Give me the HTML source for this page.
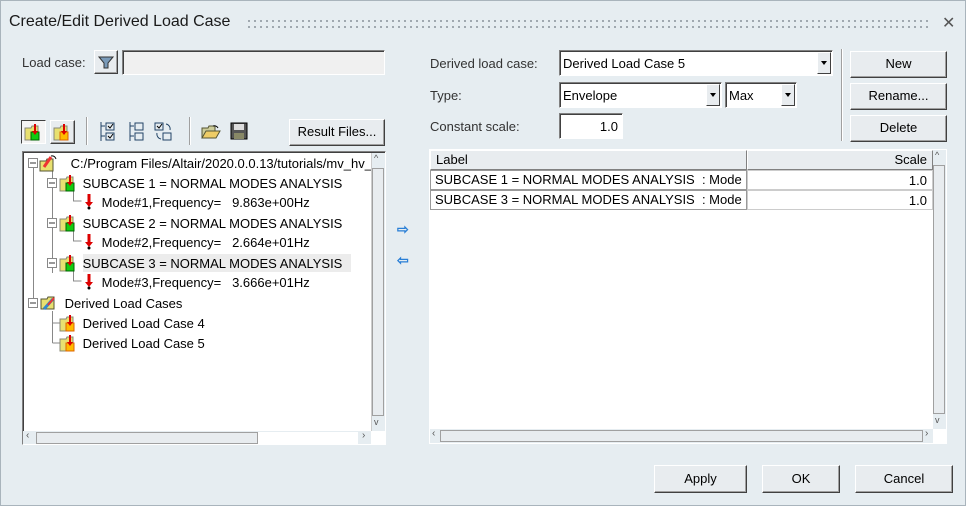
<!DOCTYPE html>
<html><head><meta charset="utf-8"><style>
*{box-sizing:border-box;margin:0;padding:0}
body{width:966px;height:506px;background:#e6edf1;font-family:"Liberation Sans",sans-serif;font-size:13px;color:#000;position:relative;overflow:hidden;border:1px solid #a9b4bc}
.a{position:absolute;white-space:nowrap}
.btn{position:absolute;background:#e8ecef;border:1px solid;border-color:#fff #404040 #404040 #fff;box-shadow:inset -1px -1px 0 #a0a0a0;text-align:center;font-size:13px}
.sunk{position:absolute;background:#fff;border:1px solid;border-color:#808080 #fff #fff #808080;box-shadow:inset 1px 1px 0 #404040}
.lbl{color:#333;font-size:13px}
.dd{position:absolute;top:1px;right:1px;width:14px;bottom:1px;background:#e8ecef;border:1px solid;border-color:#fff #404040 #404040 #fff}
.dd:after{content:"";position:absolute;left:3px;top:8px;border:3px solid transparent;border-top:4px solid #000}
.row{position:absolute;height:20px;line-height:20px;white-space:nowrap}
.sb{position:absolute;background:#e6edf1}
</style></head><body>
<div class="a" style="left:8px;top:12px;font-size:16px;color:#1a1a1a">Create/Edit Derived Load Case</div>
<div class="a" style="left:245px;top:17px;width:685px;height:12px;background-image:radial-gradient(circle,#9aa3aa 1px,transparent 1.2px);background-size:6px 6px"></div>
<div class="a" style="left:941px;top:12px;font-size:16px;color:#555">✕</div>

<div class="a lbl" style="left:21px;top:54px">Load case:</div>
<div class="btn" style="left:93px;top:49px;width:24px;height:24px"><svg width="22" height="22"><path d="M4 6h14l-5 6v5h-4v-5z" fill="#7a9ab8" stroke="#333"/></svg></div>
<div class="sunk" style="left:121px;top:49px;width:263px;height:25px;background:#f0f0f0"></div>

<div class="a" style="left:20px;top:119px;width:25px;height:24px;background:#f4f4f4;border:1px solid;border-color:#404040 #fff #fff #404040"></div>
<svg class="a" style="left:23px;top:121px" width="20" height="20"><path d="M1 6h6l1-2h6v14H1z" fill="#e8e070" stroke="#887"/><rect x="7" y="10" width="8" height="8" fill="#1c1" stroke="#060"/><path d="M11 2v9" stroke="#d00" stroke-width="2"/><path d="M8 9l3 4 3-4z" fill="#d00"/></svg>
<div class="btn" style="left:49px;top:119px;width:25px;height:24px"></div>
<svg class="a" style="left:52px;top:121px" width="20" height="20"><path d="M1 6h6l1-2h6v14H1z" fill="#e8e070" stroke="#887"/><rect x="7" y="10" width="8" height="8" fill="#fb0" stroke="#d60"/><path d="M11 2v9" stroke="#d00" stroke-width="2"/><path d="M8 9l3 4 3-4z" fill="#d00"/></svg>
<div class="a" style="left:85px;top:116px;width:2px;height:28px;border-left:1px solid #a0a0a0;border-right:1px solid #fff"></div>
<svg class="a" style="left:98px;top:120px" width="22" height="22" fill="none" stroke="#246"><path d="M2 1v19M2 5h4M2 15h4"/><rect x="7" y="2" width="8" height="7"/><rect x="7" y="12" width="8" height="7"/><path d="M9 5l2 2 3-4M9 15l2 2 3-4" stroke="#000"/></svg>
<svg class="a" style="left:127px;top:120px" width="22" height="22" fill="none" stroke="#246"><path d="M2 1v19M2 5h4M2 15h4"/><rect x="7" y="2" width="8" height="7"/><rect x="7" y="12" width="8" height="7"/></svg>
<svg class="a" style="left:152px;top:120px" width="22" height="22" fill="none" stroke="#246"><rect x="2" y="2" width="8" height="7"/><rect x="10" y="12" width="8" height="7"/><path d="M4 5l2 2 3-4" stroke="#000"/><path d="M13 3a5 5 0 0 1 4 6M8 18a5 5 0 0 1-4-6"/></svg>
<div class="a" style="left:188px;top:116px;width:2px;height:28px;border-left:1px solid #a0a0a0;border-right:1px solid #fff"></div>
<svg class="a" style="left:200px;top:121px" width="20" height="20"><path d="M1 6h6l1-2h6v12H1z" fill="#cc9" stroke="#553"/><path d="M1 16l4-7h14l-4 7z" fill="#ec6" stroke="#553"/><path d="M12 4a4 4 0 0 1 5 2" fill="none" stroke="#000"/></svg>
<svg class="a" style="left:229px;top:121px" width="18" height="18"><rect x="1" y="1" width="16" height="16" fill="#555" stroke="#000"/><rect x="4" y="2" width="10" height="6" fill="#ddd"/><rect x="4" y="11" width="10" height="6" fill="#886"/></svg>
<div class="btn" style="left:288px;top:118px;width:96px;height:27px;line-height:24px">Result Files...</div>

<div class="sunk" style="left:21px;top:150px;width:364px;height:294px"></div>
<div class="a" style="left:23px;top:152px;width:347px;height:278px;overflow:hidden">
 <svg class="a" style="left:0;top:0" width="347" height="278" stroke="#888" fill="none" shape-rendering="crispEdges">
  <path d="M9.5 10v140M28.5 18v102M49.5 38v10h8M49.5 78v10h8M49.5 118v10h8M28.5 158v32M28.5 170h8M28.5 190h8"/>
  <g fill="#fff"><rect x="4.5" y="5.5" width="9" height="9"/><rect x="23.5" y="25.5" width="9" height="9"/><rect x="23.5" y="65.5" width="9" height="9"/><rect x="23.5" y="105.5" width="9" height="9"/><rect x="4.5" y="145.5" width="9" height="9"/></g>
  <path d="M6 10h6M25 30h6M25 70h6M25 110h6M6 150h6" stroke="#333"/>
 </svg>
 <div class="row" style="left:15px;top:0"><svg width="20" height="20" style="vertical-align:-5px"><path d="M1 8h6l1-2h6v12H1z" fill="#e8e070" stroke="#553"/><path d="M5 14l7-10" stroke="#e33" stroke-width="3"/><path d="M12 3a4 4 0 0 1 5 3" fill="none" stroke="#000"/></svg> <span style="margin-left:8px">C:/Program Files/Altair/2020.0.0.13/tutorials/mv_hv_</span></div>
 <div class="row" style="left:35px;top:20px"><svg width="20" height="20" style="vertical-align:-5px"><path d="M1 6h6l1-2h6v14H1z" fill="#e8e070" stroke="#887"/><rect x="7" y="10" width="8" height="8" fill="#1c1" stroke="#060"/><path d="M11 2v9" stroke="#d00" stroke-width="2"/><path d="M8 9l3 4 3-4z" fill="#d00"/></svg> <span>SUBCASE 1 = NORMAL MODES ANALYSIS</span></div>
 <div class="row" style="left:60px;top:40px"><svg width="10" height="18" style="vertical-align:-4px"><path d="M5 1v9" stroke="#d00" stroke-width="3"/><path d="M1 9l4 5 4-5z" fill="#d00"/><circle cx="5" cy="15" r="1.5" fill="#000"/></svg> <span style="margin-left:4px">Mode#1,Frequency=&nbsp;&nbsp; 9.863e+00Hz</span></div>
 <div class="row" style="left:35px;top:60px"><svg width="20" height="20" style="vertical-align:-5px"><path d="M1 6h6l1-2h6v14H1z" fill="#e8e070" stroke="#887"/><rect x="7" y="10" width="8" height="8" fill="#1c1" stroke="#060"/><path d="M11 2v9" stroke="#d00" stroke-width="2"/><path d="M8 9l3 4 3-4z" fill="#d00"/></svg> <span>SUBCASE 2 = NORMAL MODES ANALYSIS</span></div>
 <div class="row" style="left:60px;top:80px"><svg width="10" height="18" style="vertical-align:-4px"><path d="M5 1v9" stroke="#d00" stroke-width="3"/><path d="M1 9l4 5 4-5z" fill="#d00"/><circle cx="5" cy="15" r="1.5" fill="#000"/></svg> <span style="margin-left:4px">Mode#2,Frequency=&nbsp;&nbsp; 2.664e+01Hz</span></div>
 <div class="a" style="left:59px;top:101px;width:268px;height:18px;background:#ececec"></div>
 <div class="row" style="left:35px;top:100px"><svg width="20" height="20" style="vertical-align:-5px"><path d="M1 6h6l1-2h6v14H1z" fill="#e8e070" stroke="#887"/><rect x="7" y="10" width="8" height="8" fill="#1c1" stroke="#060"/><path d="M11 2v9" stroke="#d00" stroke-width="2"/><path d="M8 9l3 4 3-4z" fill="#d00"/></svg> <span>SUBCASE 3 = NORMAL MODES ANALYSIS</span></div>
 <div class="row" style="left:60px;top:120px"><svg width="10" height="18" style="vertical-align:-4px"><path d="M5 1v9" stroke="#d00" stroke-width="3"/><path d="M1 9l4 5 4-5z" fill="#d00"/><circle cx="5" cy="15" r="1.5" fill="#000"/></svg> <span style="margin-left:4px">Mode#3,Frequency=&nbsp;&nbsp; 3.666e+01Hz</span></div>
 <div class="row" style="left:16px;top:140px"><svg width="20" height="20" style="vertical-align:-5px"><path d="M1 6h6l1-2h6v12H1z" fill="#e8e070" stroke="#553"/><path d="M4 16l9-10" stroke="#38c" stroke-width="3"/><path d="M8 12l6-7" stroke="#e33" stroke-width="2"/></svg> <span style="margin-left:1px">Derived Load Cases</span></div>
 <div class="row" style="left:35px;top:160px"><svg width="20" height="20" style="vertical-align:-5px"><path d="M1 6h6l1-2h6v14H1z" fill="#e8e070" stroke="#887"/><rect x="7" y="10" width="8" height="8" fill="#fb0" stroke="#d60"/><path d="M11 2v9" stroke="#d00" stroke-width="2"/><path d="M8 9l3 4 3-4z" fill="#d00"/></svg> <span>Derived Load Case 4</span></div>
 <div class="row" style="left:35px;top:180px"><svg width="20" height="20" style="vertical-align:-5px"><path d="M1 6h6l1-2h6v14H1z" fill="#e8e070" stroke="#887"/><rect x="7" y="10" width="8" height="8" fill="#fb0" stroke="#d60"/><path d="M11 2v9" stroke="#d00" stroke-width="2"/><path d="M8 9l3 4 3-4z" fill="#d00"/></svg> <span>Derived Load Case 5</span></div>
</div>
<div class="sb" style="left:370px;top:152px;width:14px;height:278px;border-left:1px solid #ccc"></div>
<div class="a" style="left:373px;top:152px;font-size:9px;color:#555">^</div>
<div class="a" style="left:371px;top:167px;width:12px;height:248px;border:1px solid #a0a0a0;background:#e8ecef"></div>
<div class="a" style="left:373px;top:416px;font-size:9px;color:#555">v</div>
<div class="sb" style="left:22px;top:430px;width:348px;height:13px"></div>
<div class="a" style="left:35px;top:431px;width:222px;height:12px;border:1px solid #a0a0a0;background:#e8ecef"></div>
<div class="a" style="left:257px;top:431px;width:100px;height:12px;background:#fff"></div>
<div class="a" style="left:25px;top:429px;font-size:10px;color:#555">‹</div>
<div class="a" style="left:361px;top:429px;font-size:10px;color:#555">›</div>

<div class="a" style="left:396px;top:220px;color:#2a7fd6;font-size:14px;font-weight:bold">⇨</div>
<div class="a" style="left:396px;top:251px;color:#2a7fd6;font-size:14px;font-weight:bold">⇦</div>

<div class="a lbl" style="left:429px;top:55px">Derived load case:</div>
<div class="sunk" style="left:558px;top:49px;width:274px;height:26px"><span class="a" style="left:3px;top:5px">Derived Load Case 5</span><div class="dd"></div></div>
<div class="a lbl" style="left:429px;top:87px">Type:</div>
<div class="sunk" style="left:558px;top:81px;width:163px;height:26px"><span class="a" style="left:3px;top:5px">Envelope</span><div class="dd"></div></div>
<div class="sunk" style="left:724px;top:81px;width:72px;height:26px"><span class="a" style="left:3px;top:5px">Max</span><div class="dd"></div></div>
<div class="a lbl" style="left:429px;top:118px">Constant scale:</div>
<div class="sunk" style="left:558px;top:112px;width:64px;height:26px"><span class="a" style="right:4px;top:5px">1.0</span></div>
<div class="a" style="left:840px;top:48px;width:2px;height:92px;border-left:1px solid #a0a0a0;border-right:1px solid #fff"></div>
<div class="btn" style="left:849px;top:50px;width:97px;height:27px;line-height:24px">New</div>
<div class="btn" style="left:849px;top:82px;width:97px;height:27px;line-height:24px">Rename...</div>
<div class="btn" style="left:849px;top:114px;width:97px;height:27px;line-height:24px">Delete</div>

<div class="sunk" style="left:428px;top:148px;width:518px;height:295px;box-shadow:none;border-color:#fff"></div>
<div class="a" style="left:429px;top:149px;width:317px;height:20px;background:#e8ecef;border:1px solid;border-color:#fff #808080 #808080 #fff;padding:1px 5px">Label</div>
<div class="a" style="left:746px;top:149px;width:186px;height:20px;background:#e8ecef;border:1px solid;border-color:#fff #808080 #808080 #fff;padding:1px 5px;text-align:right">Scale</div>
<div class="a" style="left:429px;top:169px;width:317px;height:20px;border:1px solid #999;padding:1px 4px;overflow:hidden">SUBCASE 1 = NORMAL MODES ANALYSIS&nbsp; : Mode</div>
<div class="a" style="left:746px;top:169px;width:186px;height:20px;border:1px solid #ccc;padding:2px 5px;text-align:right">1.0</div>
<div class="a" style="left:429px;top:189px;width:317px;height:20px;border:1px solid #999;padding:1px 4px;overflow:hidden">SUBCASE 3 = NORMAL MODES ANALYSIS&nbsp; : Mode</div>
<div class="a" style="left:746px;top:189px;width:186px;height:20px;border:1px solid #ccc;padding:2px 5px;text-align:right">1.0</div>
<div class="sb" style="left:932px;top:149px;width:13px;height:279px"></div>
<div class="a" style="left:934px;top:149px;font-size:9px;color:#555">^</div>
<div class="a" style="left:932px;top:164px;width:12px;height:249px;border:1px solid #a0a0a0;background:#e8ecef"></div>
<div class="a" style="left:934px;top:414px;font-size:9px;color:#555">v</div>
<div class="sb" style="left:429px;top:428px;width:503px;height:14px"></div>
<div class="a" style="left:439px;top:429px;width:483px;height:12px;border:1px solid #a0a0a0;background:#e8ecef"></div>
<div class="a" style="left:431px;top:427px;font-size:10px;color:#555">‹</div>
<div class="a" style="left:924px;top:427px;font-size:10px;color:#555">›</div>

<div class="btn" style="left:653px;top:464px;width:93px;height:28px;line-height:25px">Apply</div>
<div class="btn" style="left:761px;top:464px;width:78px;height:28px;line-height:25px">OK</div>
<div class="btn" style="left:854px;top:464px;width:98px;height:28px;line-height:25px">Cancel</div>
</body></html>
